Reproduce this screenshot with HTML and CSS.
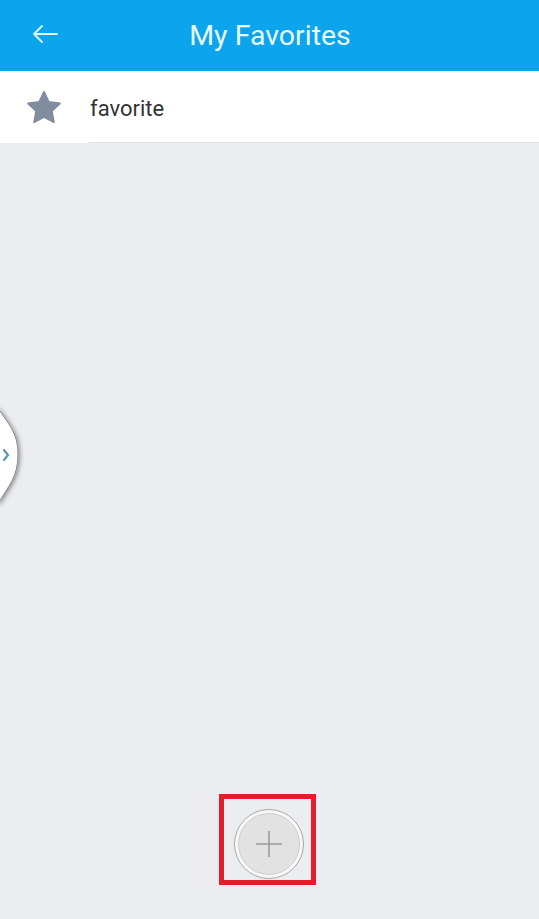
FILE: index.html
```html
<!DOCTYPE html>
<html>
<head>
<meta charset="utf-8">
<link rel="stylesheet" href="styles.css">
</head>
<body>
<div class="app">
  <header class="topbar">
    <span class="back">
      <svg width="28" height="20" viewBox="0 0 28 20"><path d="M26 10H3M11 2L3 10l8 8" fill="none" stroke="#e6f6ff" stroke-width="1.8" stroke-linecap="round" stroke-linejoin="round"/></svg>
    </span>
    <h1 class="title">My Favorites</h1>
  </header>
  <div class="row">
    <span class="star">
      <svg width="38" height="36" viewBox="0 0 24 23"><path d="M12 1.2l3.1 6.5 7 .9-5.1 4.9 1.3 7.1L12 17.2l-6.3 3.4 1.3-7.1L1.9 8.6l7-.9z" fill="#7f8d9f" stroke="#7f8d9f" stroke-width="1.2" stroke-linejoin="round"/></svg>
    </span>
    <span class="label">favorite</span>
  </div>
  <div class="content">
    <div class="sidetab">
      <svg width="30" height="120" viewBox="0 0 30 120">
        <defs>
          <filter id="sh" x="-50%" y="-20%" width="200%" height="140%">
            <feGaussianBlur in="SourceAlpha" stdDeviation="2.5"/>
            <feOffset dx="1" dy="1"/>
            <feComponentTransfer><feFuncA type="linear" slope="0.5"/></feComponentTransfer>
            <feMerge><feMergeNode/><feMergeNode in="SourceGraphic"/></feMerge>
          </filter>
        </defs>
        <path d="M-2 6 C8 22 18 30 18 52 C18 76 8 84 -2 102 Z" fill="#ffffff" stroke="#8a8a8a" stroke-width="1" filter="url(#sh)"/>
        <path d="M4 48l4 5-4 5" fill="none" stroke="#5a9ab0" stroke-width="2.2" stroke-linecap="round" stroke-linejoin="round"/>
      </svg>
    </div>
    <div class="addwrap">
      <div class="highlight">
        <div class="addbtn">
          <div class="addinner">
            <svg width="28" height="28" viewBox="0 0 28 28"><path d="M14 1v26M1 14h26" stroke="#9c9c9c" stroke-width="1.6"/></svg>
          </div>
        </div>
      </div>
    </div>
  </div>
</div>
</body>
</html>
```
FILE: styles.css
```css
html, body {
  margin: 0;
  padding: 0;
}
body {
  font-family: Roboto, "Noto Sans", sans-serif;
  background: #ecedf1;
}
.app {
  width: 539px;
  height: 919px;
  display: flex;
  flex-direction: column;
  overflow: hidden;
}
.topbar {
  height: 71px;
  background: #0ca4ec;
  display: flex;
  align-items: center;
  position: relative;
  flex: none;
}
.back {
  position: absolute;
  left: 31px;
  top: 24px;
  display: flex;
}
.title {
  margin: 0;
  width: 100%;
  text-align: center;
  font-weight: 400;
  font-size: 28.5px;
  color: #e9f8ff;
  padding-left: 1px;
}
.row {
  height: 72px;
  background: #ffffff;
  display: flex;
  align-items: center;
  position: relative;
  flex: none;
}
.row::after {
  content: "";
  position: absolute;
  left: 88px;
  right: 0;
  bottom: 0;
  height: 1px;
  background: #e2e3e6;
}
.star {
  width: 38px;
  margin-left: 25px;
  display: flex;
  margin-top: 1px;
}
.label {
  margin-left: 27px;
  font-size: 22px;
  color: #333333;
  margin-top: 2px;
}
.content {
  flex: 1;
  position: relative;
  display: flex;
  flex-direction: column;
  justify-content: flex-end;
}
.sidetab {
  position: absolute;
  left: 0;
  top: 259px;
  display: flex;
}
.addwrap {
  display: flex;
  justify-content: center;
  padding-bottom: 34px;
  padding-right: 4px;
}
.highlight {
  width: 87px;
  height: 81px;
  border: 5px solid #e01f2b;
  display: flex;
  align-items: flex-start;
  justify-content: flex-start;
  padding: 0;
}
.addbtn {
  width: 70px;
  height: 70px;
  margin: 10px 0 0 10px;
  box-sizing: border-box;
  border-radius: 50%;
  border: 1.5px solid #a9a9a9;
  background: #f7f7f7;
  display: flex;
  align-items: center;
  justify-content: center;
}
.addinner {
  width: 62px;
  height: 62px;
  border-radius: 50%;
  background: #e2e2e2;
  border: 1px solid #cfcfcf;
  display: flex;
  align-items: center;
  justify-content: center;
  box-sizing: border-box;
}
```
